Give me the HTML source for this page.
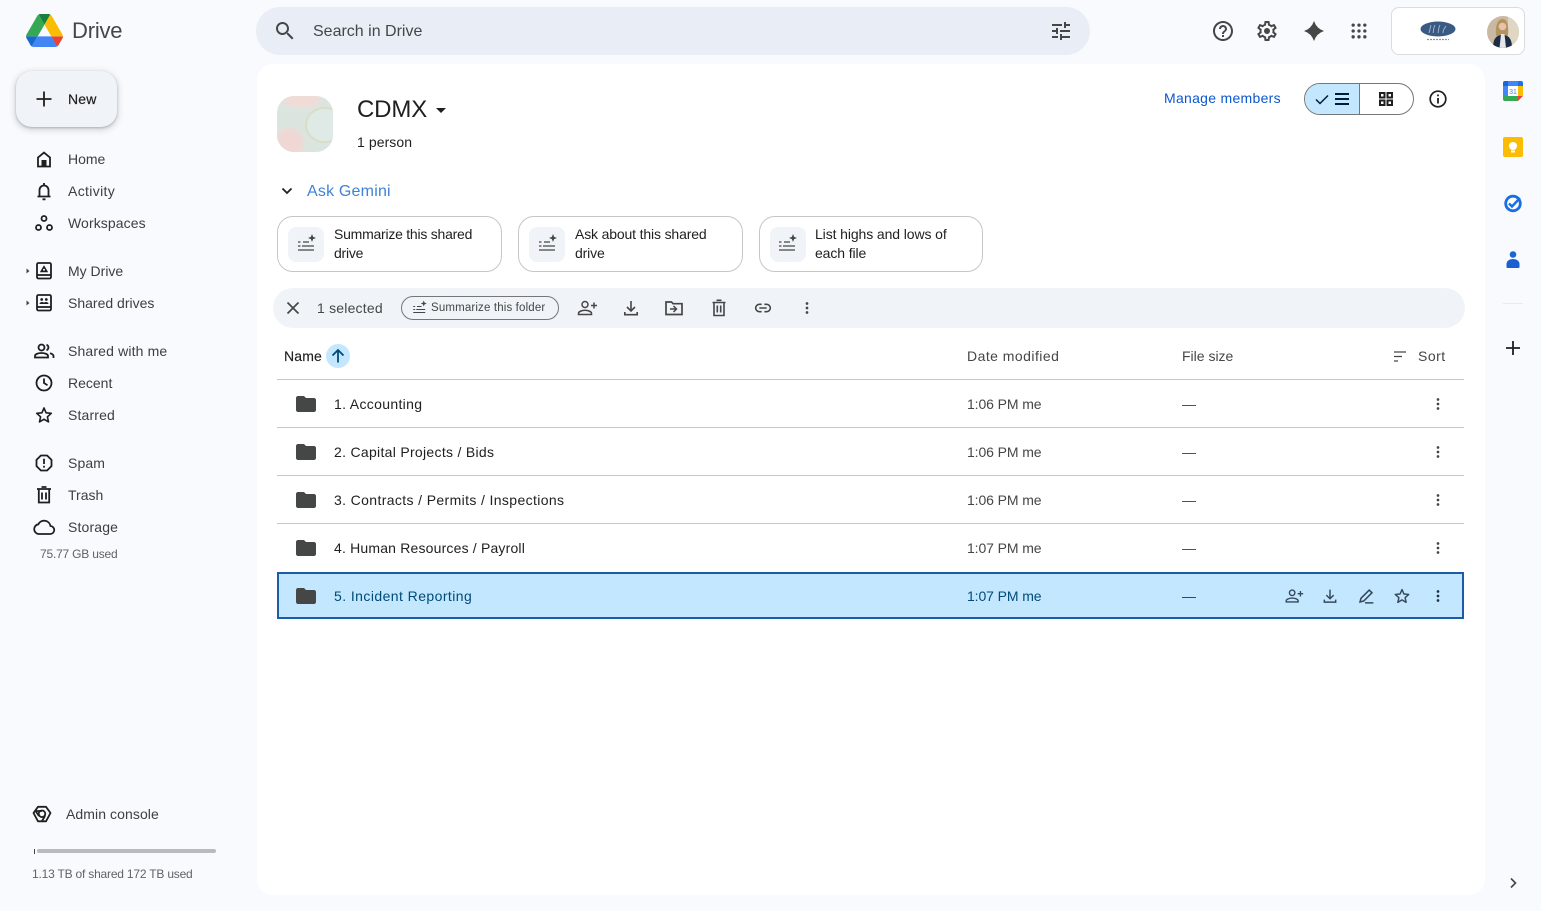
<!DOCTYPE html>
<html><head><meta charset="utf-8"><style>
*{box-sizing:border-box}
html,body{margin:0;padding:0;width:1541px;height:911px;overflow:hidden;background:#f8fafd;font-family:"Liberation Sans",sans-serif;color:#1f1f1f}
.t{position:absolute;white-space:nowrap;font-size:14px;line-height:20px}
.i{position:absolute;width:24px;height:24px;fill:#1f1f1f}
.s{fill:none;stroke:#1f1f1f;stroke-width:1.800}
.nav{color:#3c4043}
.line{position:absolute;left:277px;width:1187px;height:1px;background:#c7c7c7}
.card{position:absolute;top:216px;height:56px;border:1px solid #c4c7c5;border-radius:16px;background:#fff}
.card b{position:absolute;left:10px;top:10px;width:36px;height:35px;background:#f0f4f9;border-radius:8px}
.g{color:#444746}
</style></head><body>
<svg width="0" height="0" style="position:absolute"><defs>
<symbol id="folder" viewBox="0 0 24 24"><path d="M10 4H4c-1.100 0-1.990.9-1.990 2L2 18c0 1.100.9 2 2 2h16c1.100 0 2-.9 2-2V8c0-1.100-.9-2-2-2h-8l-2-2z"/></symbol>
<symbol id="dots" viewBox="0 0 24 24"><circle cx="12" cy="7.500" r="1.350"/><circle cx="12" cy="12" r="1.350"/><circle cx="12" cy="16.500" r="1.350"/></symbol>
<symbol id="addp" viewBox="0 0 24 24"><g fill="none" stroke="currentColor" stroke-width="1.500"><circle cx="10" cy="8.500" r="3"/><path d="M3.500 18.500v-1.200c0-1.800 3.500-3 6.500-3s6.500 1.200 6.500 3v1.200z"/><path d="M19 6.500v6M16 9.500h6"/></g></symbol>
<symbol id="down" viewBox="0 0 24 24"><g fill="none" stroke="currentColor" stroke-width="1.600"><path d="M12 5v10M8 11l4 4 4-4M5.800 16v2.700h12.400V16"/></g></symbol>
<symbol id="spark" viewBox="0 0 24 24"><g fill="none" stroke="#444746" stroke-width="1.300"><path d="M8 10h6M7 14h12M3 18h16M3 10h2.500M3 14h2.500"/></g><path fill="#444746" d="M17 2l1.100 2.900 2.900 1.100-2.900 1.100-1.100 2.900-1.100-2.900-2.900-1.100 2.900-1.100z"/></symbol>
<symbol id="star" viewBox="0 0 24 24"><path fill="none" stroke="currentColor" stroke-width="1.600" stroke-linejoin="round" d="M12 5l2.100 4.800 5.200.5-3.900 3.500 1.100 5.100-4.500-2.700-4.500 2.700 1.100-5.100-3.900-3.500 5.200-.5z"/></symbol>
</defs></svg>

<!-- logo -->
<svg class="i" style="left:26px;top:14px;width:37px;height:33px" viewBox="0 0 87.300 78"><path d="M6.600 66.850l3.850 6.650c.8 1.400 1.950 2.500 3.300 3.300L27.500 53H0c0 1.550.4 3.100 1.200 4.500z" fill="#1967d2"/><path d="M43.650 25L29.900 1.200c-1.350.8-2.500 1.900-3.300 3.300l-25.400 44A9.060 9.060 0 000 53h27.500z" fill="#34a853"/><path d="M73.550 76.800c1.350-.8 2.500-1.900 3.300-3.300l1.600-2.750L86.100 57.500c.8-1.400 1.200-2.950 1.200-4.500H59.800l5.850 11.500z" fill="#ea4335"/><path d="M43.650 25L57.400 1.200C56.050.4 54.500 0 52.900 0H34.400c-1.600 0-3.150.45-4.500 1.200z" fill="#188038"/><path d="M59.800 53H27.500L13.750 76.800c1.350.8 2.900 1.200 4.500 1.200h50.800c1.600 0 3.150-.45 4.500-1.200z" fill="#4285f4"/><path d="M73.400 26.500L60.700 4.500c-.8-1.400-1.950-2.500-3.300-3.300L43.650 25 59.800 53h27.450c0-1.550-.4-3.100-1.200-4.500z" fill="#fbbc04"/></svg>
<div class="t" style="left:72px;top:17px;font-size:22px;line-height:28px;letter-spacing:-.2px;color:#444746">Drive</div>

<!-- New -->
<div style="position:absolute;left:16px;top:71px;width:101px;height:56px;background:#f0f4f9;border-radius:16px;box-shadow:0 1px 2px rgba(60,64,67,.3),0 2px 6px 2px rgba(60,64,67,.15)"></div>
<svg class="i" style="left:32px;top:87px"><path d="M12 4.500v15M4.500 12h15" stroke="#1f1f1f" stroke-width="1.800"/></svg>
<div class="t" style="left:68px;top:89px;letter-spacing:.2px;color:#1f1f1f;-webkit-text-stroke:.2px #1f1f1f">New</div>

<!-- Nav -->
<svg class="i" style="left:32px;top:147px" viewBox="0 0 24 24"><path class="s" d="M6 19.500V10.500L12 5.500l6 5v9z"/><rect x="9.500" y="13" width="5" height="6.500"/></svg>
<div class="t nav" style="left:68px;top:149px">Home</div>
<svg class="i" style="left:32px;top:179px" viewBox="0 0 24 24"><path class="s" d="M7.500 17v-6a4.500 4.500 0 019 0v6M5.500 17.500h13M12 4v2M10.500 20.300h3"/></svg>
<div class="t nav" style="left:68px;top:181px;letter-spacing:.35px">Activity</div>
<svg class="i" style="left:32px;top:211px" viewBox="0 0 24 24"><g class="s" stroke-width="1.600"><circle cx="12" cy="7.500" r="2.500"/><circle cx="6.500" cy="16.500" r="2.500"/><circle cx="17.500" cy="16.500" r="2.500"/></g></svg>
<div class="t nav" style="left:68px;top:213px;letter-spacing:.1px">Workspaces</div>

<svg class="i" style="left:24px;top:267px;width:8px;height:8px" viewBox="0 0 8 8"><path d="M2.500 1.500L5.500 4 2.500 6.500z" fill="#444"/></svg>
<svg class="i" style="left:32px;top:259px" viewBox="0 0 24 24"><rect class="s" x="5" y="4" width="14" height="15.500" rx="1.500"/><path class="s" d="M5 16h14"/><path d="M12 6.800l3.700 6.200H8.300z" stroke="#1f1f1f" stroke-width=".6" stroke-linejoin="round"/><circle cx="12" cy="10.800" r="1" fill="#f8fafd"/></svg>
<div class="t nav" style="left:68px;top:261px">My Drive</div>
<svg class="i" style="left:24px;top:299px;width:8px;height:8px" viewBox="0 0 8 8"><path d="M2.500 1.500L5.500 4 2.500 6.500z" fill="#444"/></svg>
<svg class="i" style="left:32px;top:291px" viewBox="0 0 24 24"><rect class="s" x="5" y="4" width="14" height="15.500" rx="1.500"/><path class="s" d="M5 16h14"/><circle cx="9.700" cy="8.500" r="1.400"/><circle cx="14.300" cy="8.500" r="1.400"/><path d="M7.500 13c0-2.500 4.500-2.500 4.500-1 0-1.500 4.500-1.500 4.500 1z"/></svg>
<div class="t nav" style="left:68px;top:293px">Shared drives</div>

<svg class="i" style="left:32px;top:339px" viewBox="0 0 24 24"><g class="s"><circle cx="9.500" cy="8.500" r="3"/><path d="M3 18.500v-1.500c0-2 3.500-3 6.500-3s6.500 1 6.500 3v1.500z"/><path d="M14.500 5.700a3 3 0 010 5.600M18 14.300c2 .5 3.500 1.500 3.500 3V19"/></g></svg>
<div class="t nav" style="left:68px;top:341px;letter-spacing:.15px">Shared with me</div>
<svg class="i" style="left:32px;top:371px" viewBox="0 0 24 24"><g class="s" stroke-width="1.700"><circle cx="12" cy="12" r="7.500"/><path d="M12 7.500V12l3.500 2.200"/></g></svg>
<div class="t nav" style="left:68px;top:373px">Recent</div>
<svg class="i" style="left:32px;top:403px;color:#1f1f1f;fill:none"><use href="#star"/></svg>
<div class="t nav" style="left:68px;top:405px;letter-spacing:.15px">Starred</div>

<svg class="i" style="left:32px;top:451px" viewBox="0 0 24 24"><g class="s" stroke-width="1.700"><path d="M8.900 4.500h6.200l4.400 4.400v6.200l-4.400 4.400H8.900l-4.400-4.400V8.900z" stroke-linejoin="round"/><path d="M12 7.800v5.200M12 14.800v1.800"/></g></svg>
<div class="t nav" style="left:68px;top:453px;letter-spacing:.1px">Spam</div>
<svg class="i" style="left:32px;top:483px" viewBox="0 0 24 24"><path class="s" d="M6.800 6.500v13h10.400v-13M5 6h14M9.500 4h5M10 9.500v7M14 9.500v7"/></svg>
<div class="t nav" style="left:68px;top:485px">Trash</div>
<svg class="i" style="left:32px;top:515px" viewBox="0 0 24 24"><path class="s" d="M6.500 19h11.500a4 4 0 00.500-8 6.500 6.500 0 00-12.200-1.700A4.900 4.900 0 006.500 19z" stroke-width="1.600"/></svg>
<div class="t nav" style="left:68px;top:517px;letter-spacing:.15px">Storage</div>
<div class="t g" style="left:40px;top:544px;font-size:12px;letter-spacing:-.2px;color:#5f6368">75.77 GB used</div>

<svg class="i" style="left:30px;top:802px" viewBox="0 0 24 24"><g class="s" stroke-width="1.700"><path d="M8 4.800h8L20.500 11 16 19.300H8L3.500 11z" stroke-linejoin="round"/><circle cx="12" cy="11.800" r="3.300"/><path d="M5 9h7M15 14l-3 5M9 14L5.500 9"/></g></svg>
<div class="t nav" style="left:66px;top:804px;letter-spacing:.08px">Admin console</div>
<div style="position:absolute;left:34px;top:849px;width:1px;height:5px;background:#444"></div>
<div style="position:absolute;left:37px;top:849px;width:179px;height:4px;border-radius:2px;background:#b9babd"></div>
<div class="t g" style="left:32px;top:864px;font-size:12px;letter-spacing:-.2px;color:#5f6368">1.13 TB of shared 172 TB used</div>

<!-- Search -->
<div style="position:absolute;left:256px;top:7px;width:834px;height:48px;border-radius:24px;background:#e9eef6"></div>
<svg class="i" style="left:273px;top:19px;fill:#444746" viewBox="0 0 24 24"><path d="M15.500 14h-.79l-.28-.27C15.410 12.590 16 11.110 16 9.500 16 5.910 13.090 3 9.500 3S3 5.910 3 9.500 5.910 16 9.500 16c1.610 0 3.090-.59 4.230-1.570l.27.280v.79l5 4.990L20.490 19l-4.990-5zm-6 0C7.010 14 5 11.990 5 9.500S7.010 5 9.500 5 14 7.010 14 9.500 11.990 14 9.500 14z"/></svg>
<div class="t g" style="left:313px;top:21px;font-size:16px;line-height:22px">Search in Drive</div>
<svg class="i" style="left:1049px;top:19px;fill:#444746" viewBox="0 0 24 24"><path d="M3 17v2h6v-2H3zM3 5v2h10V5H3zm10 16v-2h8v-2h-8v-2h-2v6h2zM7 9v2H3v2h4v2h2V9H7zm14 4v-2H11v2h10zm-6-4h2V7h4V5h-4V3h-2v6z"/></svg>

<!-- Top right -->
<svg class="i" style="left:1211px;top:19px;fill:#444746" viewBox="0 0 24 24"><path d="M11 18h2v-2h-2v2zm1-16C6.480 2 2 6.480 2 12s4.480 10 10 10 10-4.480 10-10S17.520 2 12 2zm0 18c-4.410 0-8-3.590-8-8s3.590-8 8-8 8 3.590 8 8-3.590 8-8 8zm0-14c-2.210 0-4 1.790-4 4h2c0-1.100.9-2 2-2s2 .9 2 2c0 2-3 1.750-3 5h2c0-2.250 3-2.500 3-5 0-2.210-1.790-4-4-4z"/></svg>
<svg class="i" style="left:1255px;top:19px;fill:#444746" viewBox="0 0 24 24"><path d="M19.430 12.980c.04-.32.07-.64.07-.98 0-.34-.03-.66-.07-.98l2.110-1.650c.19-.15.24-.42.12-.64l-2-3.460c-.09-.16-.26-.25-.44-.25-.06 0-.12.010-.17.030l-2.490 1c-.52-.4-1.080-.73-1.690-.98l-.38-2.650C14.460 2.180 14.250 2 14 2h-4c-.25 0-.46.18-.49.42l-.38 2.650c-.61.25-1.170.59-1.690.98l-2.490-1c-.06-.02-.12-.03-.18-.03-.17 0-.34.09-.43.25l-2 3.460c-.13.22-.07.49.12.64l2.110 1.650c-.04.32-.07.65-.07.98 0 .33.03.66.07.98l-2.110 1.650c-.19.15-.24.42-.12.64l2 3.460c.09.16.26.25.44.25.06 0 .12-.01.17-.03l2.490-1c.52.4 1.080.73 1.690.98l.38 2.650c.03.24.24.42.49.42h4c.25 0 .46-.18.49-.42l.38-2.650c.61-.25 1.170-.59 1.690-.98l2.490 1c.06.02.12.03.18.03.17 0 .34-.09.43-.25l2-3.460c.12-.22.07-.49-.12-.64l-2.110-1.650zm-1.980-1.710c.04.31.05.52.05.73 0 .21-.02.43-.05.73l-.14 1.130.89.7 1.080.84-.7 1.210-1.270-.51-1.040-.42-.9.68c-.43.32-.84.56-1.250.73l-1.060.43-.16 1.130-.2 1.350h-1.400l-.19-1.350-.16-1.130-1.060-.43c-.43-.18-.83-.41-1.230-.71l-.91-.7-1.060.43-1.270.51-.7-1.210 1.080-.84.89-.7-.14-1.130c-.03-.31-.05-.54-.05-.74s.02-.43.05-.73l.14-1.130-.89-.7-1.080-.84.7-1.210 1.270.51 1.040.42.9-.68c.43-.32.84-.56 1.250-.73l1.060-.43.16-1.130.2-1.350h1.390l.19 1.350.16 1.130 1.060.43c.43.18.83.41 1.230.71l.91.7 1.060-.43 1.270-.51.7 1.210-1.070.85-.89.7.14 1.130z"/><circle cx="12" cy="12" r="3"/></svg>
<svg class="i" style="left:1302px;top:19px;fill:#444746" viewBox="0 0 24 24"><path d="M12 2Q14.500 9.500 22 12 14.500 14.500 12 22 9.500 14.500 2 12 9.500 9.500 12 2z"/></svg>
<svg class="i" style="left:1349px;top:21px;width:20px;height:20px;fill:#444746" viewBox="0 0 24 24"><circle cx="5" cy="5" r="2"/><circle cx="12" cy="5" r="2"/><circle cx="19" cy="5" r="2"/><circle cx="5" cy="12" r="2"/><circle cx="12" cy="12" r="2"/><circle cx="19" cy="12" r="2"/><circle cx="5" cy="19" r="2"/><circle cx="12" cy="19" r="2"/><circle cx="19" cy="19" r="2"/></svg>
<div style="position:absolute;left:1391px;top:7px;width:134px;height:48px;border:1px solid #dadce0;border-radius:8px;background:#fff"></div>
<svg class="i" style="left:1420px;top:21px;width:36px;height:20px" viewBox="0 0 36 20"><ellipse cx="18" cy="8" rx="17.500" ry="7.500" fill="#3a5a84"/><path d="M9 12c1-3 1-5 2-8M13 12c1-3 0-5 2-8M18 12c1-3 0-5 2-8M23 12c0-3 1-4 3-7" stroke="#a9bacf" fill="none" stroke-width=".9"/><path d="M7 18.500h22" stroke="#8a94a0" stroke-width="1.300" stroke-dasharray="2 1"/></svg>
<svg class="i" style="left:1487px;top:16px;width:32px;height:32px" viewBox="0 0 32 32"><defs><clipPath id="av"><circle cx="16" cy="16" r="16"/></clipPath></defs><g clip-path="url(#av)"><rect width="32" height="32" fill="#c9b9a2"/><rect x="21" width="11" height="32" fill="#dfd6c4"/><path d="M9 19c-1-12 3-16 6.500-16S22 7 21 19l-2 2h-8z" fill="#b4935f"/><circle cx="15.500" cy="10.500" r="3.800" fill="#e6c4ab"/><path d="M6 32c0-10 4-13 9.500-13S25 22 25 32z" fill="#1e2b44"/><path d="M12.500 32l1.500-14h3.500l1.500 14z" fill="#e3e6ea"/></g></svg>

<!-- Main panel -->
<div style="position:absolute;left:257px;top:64px;width:1228px;height:831px;background:#fff;border-radius:16px"></div>

<!-- drive icon -->
<svg class="i" style="left:277px;top:96px;width:56px;height:56px" viewBox="0 0 56 56"><defs><clipPath id="di"><rect width="56" height="56" rx="17"/></clipPath><filter id="bl"><feGaussianBlur stdDeviation="1.800"/></filter><filter id="bl2"><feGaussianBlur stdDeviation=".6"/></filter></defs><g clip-path="url(#di)"><rect width="56" height="56" fill="#dbe5e0"/><g filter="url(#bl)"><ellipse cx="25" cy="4" rx="19" ry="8" fill="#f0dcd7"/><ellipse cx="12" cy="47" rx="15" ry="15" fill="#efd8d4"/></g><g filter="url(#bl2)"><ellipse cx="48" cy="29" rx="19" ry="17" fill="#dfeae6" stroke="#d9d6ae" stroke-width="1.200"/></g></g></svg>

<div class="t" style="left:357px;top:94px;font-size:24px;line-height:32px;letter-spacing:-.15px;color:#1f1f1f">CDMX</div>
<svg class="i" style="left:435px;top:104px;width:12px;height:12px" viewBox="0 0 12 12"><path d="M1 4h10L6 9z" fill="#1f1f1f"/></svg>
<div class="t" style="left:357px;top:132px;letter-spacing:.08px;color:#1f1f1f">1 person</div>
<div class="t" style="left:1164px;top:88px;letter-spacing:.29px;color:#0b57d0">Manage members</div>

<!-- toggle -->
<div style="position:absolute;left:1304px;top:83px;width:110px;height:32px;border:1px solid #747775;border-radius:16px;overflow:hidden;background:#fff"><div style="position:absolute;left:0;top:0;width:55px;height:30px;background:#c2e7ff;border-right:1px solid #747775"></div></div>
<svg class="i" style="left:1314px;top:91px;width:16px;height:16px" viewBox="0 0 16 16"><path d="M2 8.500l4 4 8-8" fill="none" stroke="#001d35" stroke-width="1.500"/></svg>
<svg class="i" style="left:1333px;top:90px;width:18px;height:18px" viewBox="0 0 18 18"><path d="M2 4h14M2 9h14M2 14h14" stroke="#001d35" stroke-width="2"/></svg>
<svg class="i" style="left:1377px;top:90px;width:18px;height:18px" viewBox="0 0 18 18"><g fill="none" stroke="#1f1f1f" stroke-width="2"><rect x="3" y="3" width="4.500" height="4.500"/><rect x="10.500" y="3" width="4.500" height="4.500"/><rect x="3" y="10.500" width="4.500" height="4.500"/><rect x="10.500" y="10.500" width="4.500" height="4.500"/></g></svg>
<svg class="i" style="left:1426px;top:87px" viewBox="0 0 24 24"><circle cx="12" cy="12" r="7.800" fill="none" stroke="#1f1f1f" stroke-width="1.700"/><path d="M11.100 11h1.800v5.500h-1.800zM11.100 7.500h1.800v1.800h-1.800z"/></svg>

<!-- Gemini -->
<svg class="i" style="left:278px;top:182px;width:18px;height:18px" viewBox="0 0 18 18"><path d="M4.500 6.500L9 11l4.500-4.500" fill="none" stroke="#1f1f1f" stroke-width="1.800"/></svg>
<div class="t" style="left:307px;top:181px;font-size:16px;line-height:22px;letter-spacing:.2px;color:#3f82d8">Ask Gemini</div>

<div class="card" style="left:277px;width:225px"><b></b></div>
<svg class="i" style="left:295px;top:232px"><use href="#spark"/></svg>
<div class="t" style="left:334px;top:225px;line-height:19px;letter-spacing:-.24px;white-space:normal;width:160px">Summarize this shared drive</div>
<div class="card" style="left:518px;width:225px"><b></b></div>
<svg class="i" style="left:536px;top:232px"><use href="#spark"/></svg>
<div class="t" style="left:575px;top:225px;line-height:19px;letter-spacing:-.15px;white-space:normal;width:150px">Ask about this shared drive</div>
<div class="card" style="left:759px;width:224px"><b></b></div>
<svg class="i" style="left:776px;top:232px"><use href="#spark"/></svg>
<div class="t" style="left:815px;top:225px;line-height:19px;letter-spacing:-.1px;white-space:normal;width:150px">List highs and lows of each file</div>

<!-- Selection bar -->
<div style="position:absolute;left:273px;top:288px;width:1192px;height:40px;border-radius:20px;background:#f0f4f9"></div>
<svg class="i" style="left:281px;top:296px" viewBox="0 0 24 24"><path d="M6.500 6.500l11 11M17.500 6.500l-11 11" stroke="#444746" stroke-width="1.700"/></svg>
<div class="t g" style="left:317px;top:298px;letter-spacing:.2px">1 selected</div>
<div style="position:absolute;left:401px;top:296px;width:158px;height:24px;border:1px solid #747775;border-radius:12px"></div>
<svg class="i" style="left:411px;top:299px;width:18px;height:18px"><use href="#spark"/></svg>
<div class="t g" style="left:431px;top:298px;font-size:11.500px;letter-spacing:.15px">Summarize this folder</div>
<svg class="i" style="left:575px;top:296px;color:#444746;fill:none"><use href="#addp"/></svg>
<svg class="i" style="left:619px;top:296px;color:#444746;fill:none"><use href="#down"/></svg>
<svg class="i" style="left:662px;top:296px" viewBox="0 0 24 24"><path d="M4 6h5.500l1.500 1.700h9V18.500H4z" fill="none" stroke="#444746" stroke-width="1.700"/><path d="M8 13h6M11.500 10l3 3-3 3" fill="none" stroke="#444746" stroke-width="1.500"/></svg>
<svg class="i" style="left:707px;top:296px" viewBox="0 0 24 24"><path d="M7 7v12.500h10V7M5.500 6.500h13M9.500 4.300h5M10.300 9.500v7M13.700 9.500v7" fill="none" stroke="#444746" stroke-width="1.600"/></svg>
<svg class="i" style="left:752px;top:297px;width:22px;height:22px" viewBox="0 0 24 24"><path d="M10.500 8H8a4 4 0 000 8h2.500M13.500 8H16a4 4 0 010 8h-2.500M8 12h8" fill="none" stroke="#444746" stroke-width="1.700"/></svg>
<svg class="i" style="left:795px;top:296px;fill:#444746"><use href="#dots"/></svg>

<!-- Table head -->
<div class="t" style="left:284px;top:346px;letter-spacing:.15px;color:#1f1f1f;-webkit-text-stroke:.15px #1f1f1f">Name</div>
<div style="position:absolute;left:326px;top:344px;width:24px;height:24px;border-radius:50%;background:#c2e7ff"></div>
<svg class="i" style="left:329px;top:347px;width:18px;height:18px" viewBox="0 0 18 18"><path d="M9 15.500V3M3.500 8.500L9 3l5.500 5.500" fill="none" stroke="#004a77" stroke-width="1.800"/></svg>
<div class="t g" style="left:967px;top:346px;letter-spacing:.46px">Date modified</div>
<div class="t g" style="left:1182px;top:346px">File size</div>
<svg class="i" style="left:1391px;top:347px;width:18px;height:18px" viewBox="0 0 18 18"><path d="M3 5h12M3 9.500h8M3 14h4" stroke="#444746" stroke-width="1.300"/></svg>
<div class="t g" style="left:1418px;top:346px;letter-spacing:.5px">Sort</div>
<div class="line" style="top:379px"></div>

<!-- Rows -->
<svg class="i" style="left:294px;top:392px;fill:#444746"><use href="#folder"/></svg>
<div class="t" style="left:334px;top:394px;letter-spacing:.33px">1. Accounting</div>
<div class="t g" style="left:967px;top:394px;letter-spacing:-.1px">1:06 PM me</div>
<div class="t g" style="left:1182px;top:394px">—</div>
<svg class="i" style="left:1426px;top:392px;fill:#444746"><use href="#dots"/></svg>
<div class="line" style="top:427px"></div>

<svg class="i" style="left:294px;top:440px;fill:#444746"><use href="#folder"/></svg>
<div class="t" style="left:334px;top:442px;letter-spacing:.3px">2. Capital Projects / Bids</div>
<div class="t g" style="left:967px;top:442px;letter-spacing:-.1px">1:06 PM me</div>
<div class="t g" style="left:1182px;top:442px">—</div>
<svg class="i" style="left:1426px;top:440px;fill:#444746"><use href="#dots"/></svg>
<div class="line" style="top:475px"></div>

<svg class="i" style="left:294px;top:488px;fill:#444746"><use href="#folder"/></svg>
<div class="t" style="left:334px;top:490px;letter-spacing:.37px">3. Contracts / Permits / Inspections</div>
<div class="t g" style="left:967px;top:490px;letter-spacing:-.1px">1:06 PM me</div>
<div class="t g" style="left:1182px;top:490px">—</div>
<svg class="i" style="left:1426px;top:488px;fill:#444746"><use href="#dots"/></svg>
<div class="line" style="top:523px"></div>

<svg class="i" style="left:294px;top:536px;fill:#444746"><use href="#folder"/></svg>
<div class="t" style="left:334px;top:538px;letter-spacing:.18px">4. Human Resources / Payroll</div>
<div class="t g" style="left:967px;top:538px;letter-spacing:-.1px">1:07 PM me</div>
<div class="t g" style="left:1182px;top:538px">—</div>
<svg class="i" style="left:1426px;top:536px;fill:#444746"><use href="#dots"/></svg>

<div style="position:absolute;left:277px;top:572px;width:1187px;height:47px;background:#c2e7ff;border:2px solid #1c5ba6"></div>
<svg class="i" style="left:294px;top:584px;fill:#444746"><use href="#folder"/></svg>
<div class="t" style="left:334px;top:586px;letter-spacing:.43px;color:#004a77">5. Incident Reporting</div>
<div class="t" style="left:967px;top:586px;letter-spacing:-.1px;color:#004a77">1:07 PM me</div>
<div class="t" style="left:1182px;top:586px;color:#004a77">—</div>
<svg class="i" style="left:1283px;top:585px;width:22px;height:22px;color:#36495a;fill:none"><use href="#addp"/></svg>
<svg class="i" style="left:1319px;top:585px;width:22px;height:22px;color:#36495a;fill:none"><use href="#down"/></svg>
<svg class="i" style="left:1355px;top:585px;width:22px;height:22px" viewBox="0 0 24 24"><path d="M5.500 18.500l1-4L15.500 5.500l3 3-9 9zM11 19.500h9" fill="none" stroke="#36495a" stroke-width="1.700"/></svg>
<svg class="i" style="left:1391px;top:585px;width:22px;height:22px;color:#36495a;fill:none"><use href="#star"/></svg>
<svg class="i" style="left:1426px;top:584px;fill:#1f3140"><use href="#dots"/></svg>

<!-- Side panel -->
<svg class="i" style="left:1503px;top:81px;width:20px;height:20px" viewBox="0 0 20 20"><rect width="20" height="20" rx="2" fill="#fff"/><path d="M0 5h5V0H2a2 2 0 00-2 2z" fill="#1967d2"/><path d="M5 0h10v5H5z" fill="#4285f4"/><path d="M15 0v5h5V2a2 2 0 00-2-2z" fill="#1a73e8"/><path d="M0 5h5v10H0z" fill="#4285f4"/><path d="M15 5h5v10h-5z" fill="#fbbc04"/><path d="M0 15h15v5H2a2 2 0 01-2-2z" fill="#34a853"/><path d="M15 15h5l-5 5z" fill="#ea4335"/><text x="10" y="13" font-size="7" text-anchor="middle" fill="#4285f4" font-family="Liberation Sans">31</text></svg>
<svg class="i" style="left:1503px;top:137px;width:20px;height:20px" viewBox="0 0 20 20"><rect width="20" height="20" rx="2" fill="#fbbc04"/><circle cx="10" cy="9" r="4" fill="#fff"/><rect x="8" y="13.500" width="4" height="2" fill="#fff"/></svg>
<svg class="i" style="left:1503px;top:193px;width:20px;height:20px" viewBox="0 0 20 20"><circle cx="10" cy="10.500" r="7.300" fill="none" stroke="#1a6fe0" stroke-width="2.800"/><path d="M6 10.500l3 3 8-8.500" fill="none" stroke="#1a6fe0" stroke-width="2.400"/></svg>
<svg class="i" style="left:1503px;top:249px;width:20px;height:20px" viewBox="0 0 20 20"><circle cx="10" cy="5.500" r="3.300" fill="#1967d2"/><path d="M3.500 18v-3c0-3 3-5 6.500-5s6.500 2 6.500 5v3a1 1 0 01-1 1h-11a1 1 0 01-1-1z" fill="#1a5fd0"/></svg>
<div style="position:absolute;left:1503px;top:303px;width:20px;height:1px;background:#e8eaed"></div>
<svg class="i" style="left:1501px;top:336px" viewBox="0 0 24 24"><path d="M12 5v14M5 12h14" stroke="#1f1f1f" stroke-width="1.800"/></svg>
<svg class="i" style="left:1505px;top:875px;width:16px;height:16px" viewBox="0 0 16 16"><path d="M6 3.500L10.500 8 6 12.500" fill="none" stroke="#444746" stroke-width="1.600"/></svg>
</body></html>
